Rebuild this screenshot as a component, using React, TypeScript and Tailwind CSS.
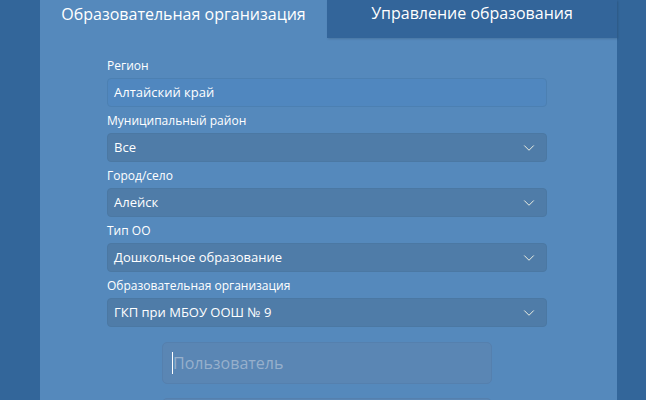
import { ChevronDown } from "lucide-react"

const fields = [
  { label: "Муниципальный район", value: "Все" },
  { label: "Город/село", value: "Алейск" },
  { label: "Тип ОО", value: "Дошкольное образование" },
  { label: "Образовательная организация", value: "ГКП при МБОУ ООШ № 9" },
]

function Select({ label, value }: { label: string; value: string }) {
  return (
    <div className="flex flex-col">
      <label className="h-[26px] pt-[5px] text-[12px] leading-[18px] text-white">{label}</label>
      <div className="flex h-[29px] items-center justify-between rounded-[4px] border border-[#4b78a3] bg-[#4f7ca8] pl-[6px] pr-[8px] text-[13px] text-white">
        <span>{value}</span>
        <ChevronDown className="h-[18px] w-[18px] text-[#fdfbe8]" strokeWidth={1.2} />
      </div>
    </div>
  )
}

export default function App() {
  return (
    <div
      className="h-[400px] w-[646px] overflow-hidden bg-[#33669a] pl-[40px]"
      style={{ fontFamily: '"Open Sans", "Noto Sans", sans-serif' }}
    >
      <div className="flex h-[38px] w-[577px]">
        <div className="flex w-[287px] justify-center bg-[#5589bc] pt-[2px] text-[16px] text-white">
          Образовательная организация
        </div>
        <div className="flex flex-1 justify-center bg-[#33659a] pt-[1px] text-[16px] text-white shadow-[1px_1px_2px_rgba(0,0,0,0.15)]">
          Управление образования
        </div>
      </div>
      <div className="h-[362px] w-[577px] bg-[#5589bc] pl-[67px] pr-[70px] pt-[18px]">
        <div className="flex flex-col">
          <label className="h-[22px] pt-[1px] text-[12px] leading-[18px] text-white">Регион</label>
          <div className="flex h-[29px] items-center rounded-[4px] border border-[#4c80b2] bg-[#5087bf] pl-[6px] text-[13px] text-white">
            Алтайский край
          </div>
        </div>
        {fields.map(f => (
          <Select key={f.label} label={f.label} value={f.value} />
        ))}
        <div className="mt-[15px] flex flex-col items-center gap-[14px]">
          <div className="flex h-[42px] w-[330px] items-center rounded-[5px] border border-[#5580ae] bg-[#5a86b4] pl-[9px] text-[16px] text-[#97b0cc]">
            <span className="h-[22px] w-[1px] bg-white" />
            Пользователь
          </div>
          <div className="flex h-[42px] w-[330px] rounded-[5px] border border-[#5580ae] bg-[#5a86b4]" />
        </div>
      </div>
    </div>
  )
}
